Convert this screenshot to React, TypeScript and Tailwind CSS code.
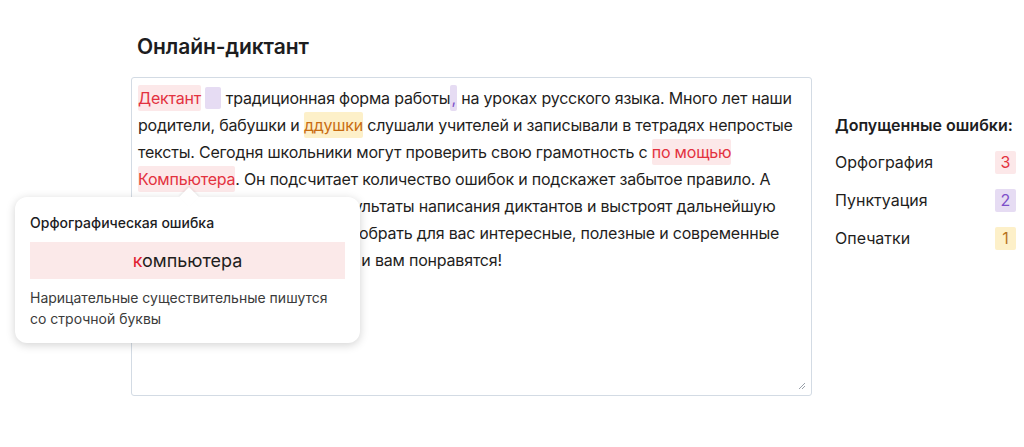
import React from 'react';

const Err: React.FC<{ kind: 'spell' | 'punct' | 'typo'; children?: React.ReactNode; className?: string }> = ({
  kind,
  children,
  className = '',
}) => {
  const styles = {
    spell: 'bg-[#fce8e9] text-[#e3323f]',
    punct: 'bg-[#e6dcf3] text-[#7d4fc9]',
    typo: 'bg-[#fdf0c9] text-[#c96d12]',
  };
  return <span className={`rounded-[2px] py-[3px] ${styles[kind]} ${className}`}>{children}</span>;
};

const lines: React.ReactNode[] = [
  <>
    <Err kind="spell">Дектант</Err> <Err kind="punct" className="inline-block w-[16px] h-[22px] align-[-5px] py-0" />{' '}
    традиционная форма работы<Err kind="punct" className="px-[1px]">,</Err> на уроках русского языка. Много лет наши
  </>,
  <>
    родители, бабушки и <Err kind="typo">ддушки</Err> слушали учителей и записывали в тетрадях непростые
  </>,
  <>
    тексты. Сегодня школьники могут проверить свою грамотность с <Err kind="spell">по мощью</Err>
  </>,
  <>
    <Err kind="spell">Компьютера</Err>. Он подсчитает количество ошибок и подскажет забытое правило. А
  </>,
  <>учителя смогут увидеть результаты написания диктантов и выстроят дальнейшую</>,
  <>работу, а также помогут подобрать для вас интересные, полезные и современные</>,
  <>тексты, которые, наверняка, и вам понравятся!</>,
];

const stats = [
  { label: 'Орфография', count: 3, badge: 'bg-[#fce8e9] text-[#e3323f]' },
  { label: 'Пунктуация', count: 2, badge: 'bg-[#e6dcf3] text-[#7d4fc9]' },
  { label: 'Опечатки', count: 1, badge: 'bg-[#fdf0c9] text-[#b8741f]' },
];

export default function App() {
  return (
    <div className="relative w-[1024px] h-[447px] bg-white text-[#1f1e1d] font-['Inter',sans-serif] overflow-hidden">
      <div className="flex pt-[32px] pl-[131px]">
        <div className="w-[681px]">
          <h1 className="pl-[6px] text-[21px] leading-[29px] font-semibold tracking-[-0.1px] text-[#1d1d1f]">Онлайн-диктант</h1>
          <div className="relative mt-[16px] h-[319px] border border-[#d3dbe4] rounded-[3px] pl-[6px] pt-[7px] text-[16px] leading-[27px] tracking-[-0.2px]">
            {lines.map((l, i) => (
              <div key={i} className="whitespace-nowrap">
                {l}
              </div>
            ))}
            <svg className="absolute right-[5px] bottom-[5px]" width="10" height="10" viewBox="0 0 10 10">
              <path d="M9 3 L3 9 M9 6 L6 9" stroke="#9aa1aa" strokeWidth="1" />
            </svg>
          </div>
        </div>
        <div className="ml-[23px] w-[180px] pt-[82px]">
          <div className="text-[16px] leading-[22px] font-semibold text-[#1d1d1f]">Допущенные ошибки:</div>
          <div className="mt-[14px] flex flex-col gap-[14px]">
            {stats.map((s) => (
              <div key={s.label} className="flex items-center justify-between h-[24px] text-[16px]">
                <span>{s.label}</span>
                <span className={`mr-[-1px] w-[21px] h-[23px] rounded-[2px] flex items-center justify-center text-[16px] ${s.badge}`}>
                  {s.count}
                </span>
              </div>
            ))}
          </div>
        </div>
      </div>

      <div className="absolute left-[15px] top-[197px] w-[345px] h-[146px] bg-white rounded-[12px] shadow-[0_2px_10px_rgba(0,0,0,0.18)] px-[15px] pt-[16px]">
        <div className="absolute left-[167px] top-[-7px] w-[14px] h-[14px] bg-white rotate-45 shadow-[-1px_-1px_2px_rgba(0,0,0,0.08)]" />
        <div className="relative text-[14px] leading-[20px] font-medium text-[#1d1d1f]">Орфографическая ошибка</div>
        <div className="relative mt-[9px] h-[37px] bg-[#fbe9e9] flex items-center justify-center text-[18px]">
          <span>
            <span className="text-[#e0202f]">к</span>омпьютера
          </span>
        </div>
        <div className="relative mt-[8px] text-[14px] leading-[21px] text-[#3b3b3b]">
          Нарицательные существительные пишутся
          <br />
          со строчной буквы
        </div>
      </div>
    </div>
  );
}
